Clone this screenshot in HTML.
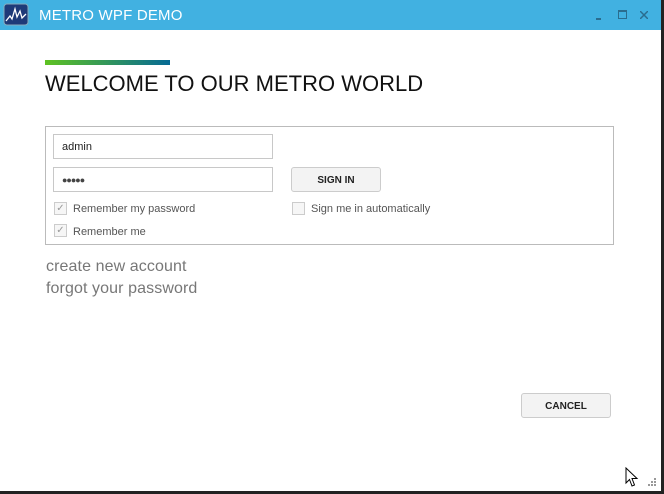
<!DOCTYPE html>
<html><head><style>
*{margin:0;padding:0;box-sizing:border-box}
body{width:664px;height:494px;background:#fff;font-family:"Liberation Sans",sans-serif;position:relative;overflow:hidden}
.tb{position:absolute;left:0;top:0;width:661px;height:30px;background:#41b1e1}
.t{position:absolute;left:39px;top:7px;color:#fff;font-size:15px;letter-spacing:0.2px}
.rb{position:absolute;left:661px;top:0;width:3px;height:494px;background:#222}
.bb{position:absolute;left:0;top:491px;width:664px;height:3px;background:#222}
.abs{position:absolute}
.inp{position:absolute;background:#fff;border:1px solid #c8c8c8;height:25px;width:220px;font-size:11px;color:#222;padding:6px 8px}
.btn{position:absolute;border:1px solid #ccc;border-radius:3px;background:#f3f3f3;font-size:10px;font-weight:bold;color:#222;text-align:center}
.cb{position:absolute;width:13px;height:13px;border:1px solid #ccc;background:#f6f6f6;font-size:10px;color:#999;line-height:11px;text-align:center}
.lb{position:absolute;font-size:11px;color:#555}
.lk{position:absolute;font-size:16px;color:#777;letter-spacing:0.1px}
</style></head><body>
<div class="tb"></div>
<svg class="abs" style="left:3px;top:3px" width="26" height="24"><rect x="1" y="1" width="24" height="21" rx="3" fill="#1e3a78" stroke="#8ab" /><polyline points="3,18 7,13 9,16 12,6 14,14 17,8 19,15 23,11" fill="none" stroke="#fff" stroke-width="1.3"/></svg>
<div class="t">METRO WPF DEMO</div>
<div class="abs" style="left:596px;top:18px;width:5px;height:2px;background:#2a6d8f"></div>
<div class="abs" style="left:618px;top:10px;width:9px;height:9px;border:1px solid #2a6d8f;border-top-width:2px"></div>
<svg class="abs" style="left:640px;top:11px" width="8" height="8"><path d="M0,0L8,8M8,0L0,8" stroke="#2a6d8f" stroke-width="1.5"/></svg>
<div class="rb"></div><div class="bb"></div>
<div class="abs" style="left:45px;top:60px;width:125px;height:5px;background:linear-gradient(90deg,#5ec222,#066a95)"></div>
<div class="abs" style="left:45px;top:71px;font-size:22px;color:#111">WELCOME TO OUR METRO WORLD</div>
<div class="abs" style="left:45px;top:126px;width:569px;height:119px;border:1px solid #bbb"></div>
<div class="inp" style="left:53px;top:134px">admin</div>
<div class="inp" style="left:53px;top:167px;font-size:9px;padding-top:7px;color:#444;letter-spacing:-1px">●●●●●</div>
<div class="btn" style="left:291px;top:167px;width:90px;height:25px;line-height:25px">SIGN IN</div>
<div class="cb" style="left:54px;top:202px">✓</div><div class="lb" style="left:73px;top:203px">Remember my password</div>
<div class="cb" style="left:54px;top:224px">✓</div><div class="lb" style="left:73px;top:226px">Remember me</div>
<div class="cb" style="left:292px;top:202px"></div><div class="lb" style="left:311px;top:203px">Sign me in automatically</div>
<div class="lk" style="left:46px;top:258px">create new account</div>
<div class="lk" style="left:46px;top:280px">forgot your password</div>
<div class="btn" style="left:521px;top:393px;width:90px;height:25px;line-height:25px">CANCEL</div>
<svg class="abs" style="left:624px;top:467px" width="16" height="22"><path d="M2,1 L2,16 L5.5,12.5 L8,19 L10.5,18 L8,11.5 L13,11.5 Z" fill="#fff" stroke="#000"/></svg>
<svg class="abs" style="left:646px;top:476px" width="12" height="12" fill="#999"><rect x="8" y="2" width="2" height="2"/><rect x="5" y="5" width="2" height="2"/><rect x="8" y="5" width="2" height="2"/><rect x="2" y="8" width="2" height="2"/><rect x="5" y="8" width="2" height="2"/><rect x="8" y="8" width="2" height="2"/></svg>
</body></html>
